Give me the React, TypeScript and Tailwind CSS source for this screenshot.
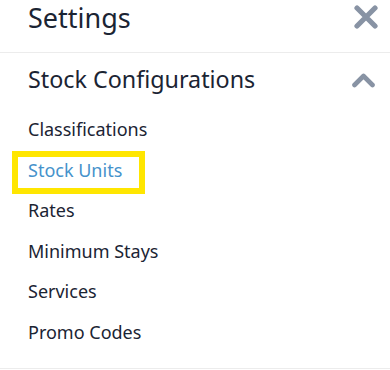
import React from "react";

const items = ["Classifications", "Stock Units", "Rates", "Minimum Stays", "Services", "Promo Codes"];

export default function App() {
  return (
    <div className="w-[390px] h-[370px] bg-white text-[#1b2433] font-['Noto_Sans',sans-serif] overflow-hidden">
      {/* Panel header */}
      <div className="h-[53px] flex items-start justify-between pl-7 pr-3 border-b border-[#ececec]">
        <h1 className="text-[27px] leading-[37px] -mt-[1px]">Settings</h1>
        <button className="h-[33px] flex items-center" aria-label="Close">
          <svg width="24" height="24" viewBox="0 0 24 24">
            <path d="M3 3 L21 21 M21 3 L3 21" stroke="#8893a4" strokeWidth="5.2" strokeLinecap="round" fill="none" />
          </svg>
        </button>
      </div>

      {/* Stock configurations section */}
      <div className="pt-[10px] pb-[15px] border-b border-[#ececec]">
        <div className="flex items-center justify-between pl-7 pr-[15px]">
          <h2 className="text-[23.3px] leading-[32px]">Stock Configurations</h2>
          <svg width="23" height="16" viewBox="0 0 23 16" className="mt-[1px]">
            <path d="M2.5 13 L11.5 4 L20.5 13" stroke="#8893a4" strokeWidth="4.6" strokeLinecap="round" strokeLinejoin="round" fill="none" />
          </svg>
        </div>
        <ul className="mt-[14px] pl-7">
          {items.map((item) =>
            item === "Stock Units" ? (
              <li key={item} className="text-[18px] leading-[40.6px]">
                <span className="inline-block -ml-[10px] pl-[10px] pr-[17px] leading-[26px] pb-[5px] text-[#4592cb] outline-[6px] outline-solid outline-[#ffe600]">
                  {item}
                </span>
              </li>
            ) : (
              <li key={item} className="text-[18px] leading-[40.6px]">
                {item}
              </li>
            )
          )}
        </ul>
      </div>
    </div>
  );
}
